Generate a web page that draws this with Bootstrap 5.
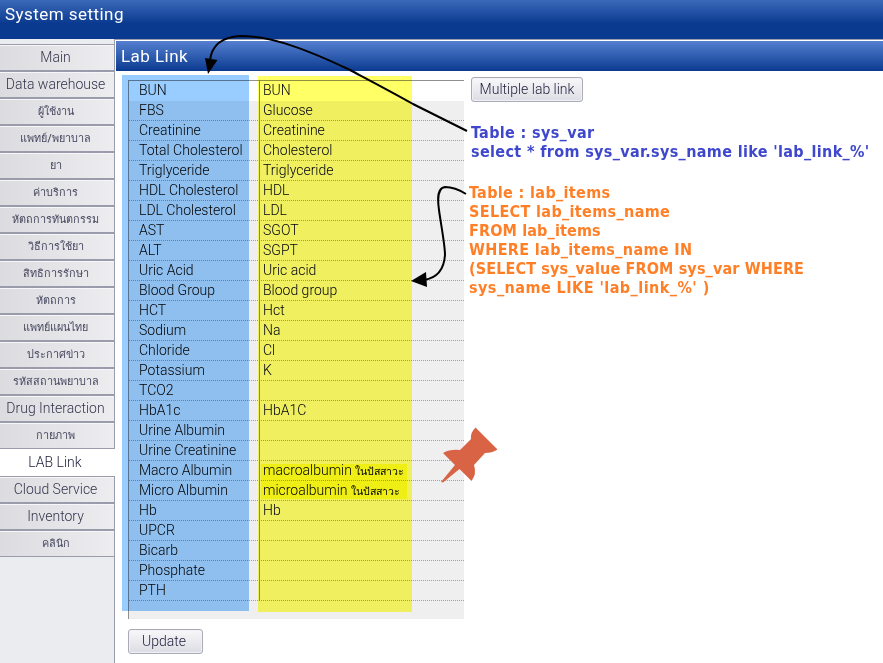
<!DOCTYPE html>
<html lang="th">
<head>
<meta charset="utf-8">
<meta name="viewport" content="width=device-width, initial-scale=1">
<title>System setting</title>
<link href="https://cdn.jsdelivr.net/npm/bootstrap@5.3.0/dist/css/bootstrap.min.css" rel="stylesheet">
<style>
body{width:883px;height:663px;overflow:hidden;background:#fff;color:#000;font-family:Roboto,"Noto Sans",sans-serif;font-size:14px;font-weight:300;line-height:20px}
.app-head{height:39px;background:linear-gradient(#3c69b9,#0a3a90 60%);color:#fff;font-size:17px;font-weight:400;line-height:29px;padding-left:5px;letter-spacing:.45px}
.side{width:115px;background:#ebecf0;border-right:1px solid #9a9bab;padding-top:5px;flex:none}
.side a{display:block;height:27px;line-height:25px;text-align:center;text-decoration:none;color:#33334c;border:solid #9a9bab;border-width:1px 0;background:linear-gradient(90deg,#dcdce0,#ededf0);box-shadow:inset 0 1px #f7f7f9;white-space:nowrap;padding-right:3px}
.side a.th{font-size:10.8px;line-height:25px;font-weight:500;color:#474760}
.side a.current{background:#fff;color:#1c1c38;border-color:#fff;width:115px;position:relative;box-shadow:none;padding-right:5px}
.sub-head{height:30px;margin:1px 0 0 1px;background:linear-gradient(#5580d0,#0a3a90);color:#fff;font-size:17px;font-weight:400;line-height:30px;padding-left:5px;letter-spacing:.45px}
.work{border-top:1px solid #9a9bab}
.lab{width:336px;height:539px;margin:9px 0 0 13px;border:solid #909090;border-width:1px 0 0 1px;background:#efefef}
.lab .line{height:20px;line-height:18px;background:repeating-linear-gradient(90deg,#a0a0a0 0 1px,transparent 1px 2px) bottom/100% 1px no-repeat;white-space:nowrap}
.lab .line:first-child{background:#fff}
.nm{width:130px;padding-left:10px;flex:none}
.val{border-left:1px solid #909090;padding-left:3px;flex:1;color:#000028}
.val small{font-size:10.6px;font-weight:500}
.tool{border:1px solid #a9abb7;border-radius:3px;background:linear-gradient(#f8f8fa,#dcdce4);color:#1c1c38;font-size:14px;font-weight:300;line-height:20px;padding:0 0 2px;height:25px;box-shadow:inset 0 0 0 1px #f0f0f5}
.update{width:75px;margin:10px 0 0 13px;padding-right:3px}
.multi{width:112px}
.aside-col{padding:6px 0 0 7px}
.note{font-family:"DejaVu Sans Condensed","DejaVu Sans",sans-serif;font-stretch:condensed;font-weight:700;font-size:16px;line-height:19px;white-space:pre;letter-spacing:.35px}
.blue{color:#3f48cc;margin-top:21px}.orange{color:#ff7f27;margin:22px 0 0 -2px}
.caps{letter-spacing:.14px}.last{letter-spacing:.46px}
.tint{position:absolute;mix-blend-mode:multiply}
.t1{left:122px;top:75px;width:127px;height:536px;background:#99ccff}
.t2{left:258px;top:76px;width:154px;height:536px;background:#ffff66}
.t3{left:261px;top:464px;width:146px;height:35px;background:#ffff38}
.ink{position:absolute;inset:0}
</style>
</head>
<body class="position-relative d-flex flex-column">
<header class="app-head">System setting</header>
<div class="d-flex flex-grow-1">
<nav class="side">
<a href="#">Main</a><a href="#">Data warehouse</a><a href="#" class="th">ผู้ใช้งาน</a><a href="#" class="th">แพทย์/พยาบาล</a><a href="#" class="th">ยา</a><a href="#" class="th">ค่าบริการ</a><a href="#" class="th">หัตถการทันตกรรม</a><a href="#" class="th">วิธีการใช้ยา</a><a href="#" class="th">สิทธิการรักษา</a><a href="#" class="th">หัตถการ</a><a href="#" class="th">แพทย์แผนไทย</a><a href="#" class="th">ประกาศข่าว</a><a href="#" class="th">รหัสสถานพยาบาล</a><a href="#">Drug Interaction</a><a href="#" class="th">กายภาพ</a><a href="#" class="current">LAB Link</a><a href="#">Cloud Service</a><a href="#">Inventory</a><a href="#" class="th">คลินิก</a>
</nav>
<main class="work flex-grow-1">
<div class="sub-head">Lab Link</div>
<div class="d-flex">
<div>
<div class="lab">
<div class="line d-flex"><span class="nm">BUN</span><span class="val">BUN</span></div>
<div class="line d-flex"><span class="nm">FBS</span><span class="val">Glucose</span></div>
<div class="line d-flex"><span class="nm">Creatinine</span><span class="val">Creatinine</span></div>
<div class="line d-flex"><span class="nm">Total Cholesterol</span><span class="val">Cholesterol</span></div>
<div class="line d-flex"><span class="nm">Triglyceride</span><span class="val">Triglyceride</span></div>
<div class="line d-flex"><span class="nm">HDL Cholesterol</span><span class="val">HDL</span></div>
<div class="line d-flex"><span class="nm">LDL Cholesterol</span><span class="val">LDL</span></div>
<div class="line d-flex"><span class="nm">AST</span><span class="val">SGOT</span></div>
<div class="line d-flex"><span class="nm">ALT</span><span class="val">SGPT</span></div>
<div class="line d-flex"><span class="nm">Uric Acid</span><span class="val">Uric acid</span></div>
<div class="line d-flex"><span class="nm">Blood Group</span><span class="val">Blood group</span></div>
<div class="line d-flex"><span class="nm">HCT</span><span class="val">Hct</span></div>
<div class="line d-flex"><span class="nm">Sodium</span><span class="val">Na</span></div>
<div class="line d-flex"><span class="nm">Chloride</span><span class="val">Cl</span></div>
<div class="line d-flex"><span class="nm">Potassium</span><span class="val">K</span></div>
<div class="line d-flex"><span class="nm">TCO2</span><span class="val"></span></div>
<div class="line d-flex"><span class="nm">HbA1c</span><span class="val">HbA1C</span></div>
<div class="line d-flex"><span class="nm">Urine Albumin</span><span class="val"></span></div>
<div class="line d-flex"><span class="nm">Urine Creatinine</span><span class="val"></span></div>
<div class="line d-flex"><span class="nm">Macro Albumin</span><span class="val">macroalbumin <small>ในปัสสาวะ</small></span></div>
<div class="line d-flex"><span class="nm">Micro Albumin</span><span class="val">microalbumin <small>ในปัสสาวะ</small></span></div>
<div class="line d-flex"><span class="nm">Hb</span><span class="val">Hb</span></div>
<div class="line d-flex"><span class="nm">UPCR</span><span class="val"></span></div>
<div class="line d-flex"><span class="nm">Bicarb</span><span class="val"></span></div>
<div class="line d-flex"><span class="nm">Phosphate</span><span class="val"></span></div>
<div class="line d-flex"><span class="nm">PTH</span><span class="val"></span></div>
</div>
<button class="tool update d-block">Update</button>
</div>
<div class="aside-col">
<button class="tool multi d-block">Multiple lab link</button>
<div class="note blue">Table : sys_var
select * from sys_var.sys_name like 'lab_link_%'</div>
<div class="note orange">Table : lab_items
SELECT lab_items_name
<span class="caps">FROM lab_items</span>
WHERE lab_items_name IN
<span class="caps">(SELECT sys_value FROM sys_var WHERE</span>
<span class="last">sys_name LIKE 'lab_link_%' )</span></div>
</div>
</div>
</main>
</div>
<div class="tint t1"></div><div class="tint t2"></div><div class="tint t3"></div>
<svg class="ink" width="883" height="663" viewBox="0 0 883 663" fill="none" stroke="#000" stroke-width="2">
<path d="M467 131 L413 104 C390 91 365 78 350 70 C310 51 273 36 240 36 C222 37 212 45 210 60"/>
<path d="M205 58 L217.500 60 L208 74Z" fill="#000" stroke="none"/>
<path d="M466 194 C455 187 449 187 445 187 C438 188 437 196 439 210 C441 225 445 245 445 255 C444 270 437 278 424 280"/>
<path d="M411 281 L426 272 L427 287Z" fill="#000" stroke="none"/>
<path d="M475.500 427.500 L497.500 449.500 Q492 453 485 453 L474 465 Q477 474 471.500 481 L459.500 469 L443 482.500 L441 482 L455 465 L443 453 Q450 449 460 450 L471 439 Q470 433 475.500 427.500Z" fill="#d96445" stroke="none"/>
</svg>
<script src="https://cdn.jsdelivr.net/npm/bootstrap@5.3.0/dist/js/bootstrap.bundle.min.js"></script>
</body>
</html>
